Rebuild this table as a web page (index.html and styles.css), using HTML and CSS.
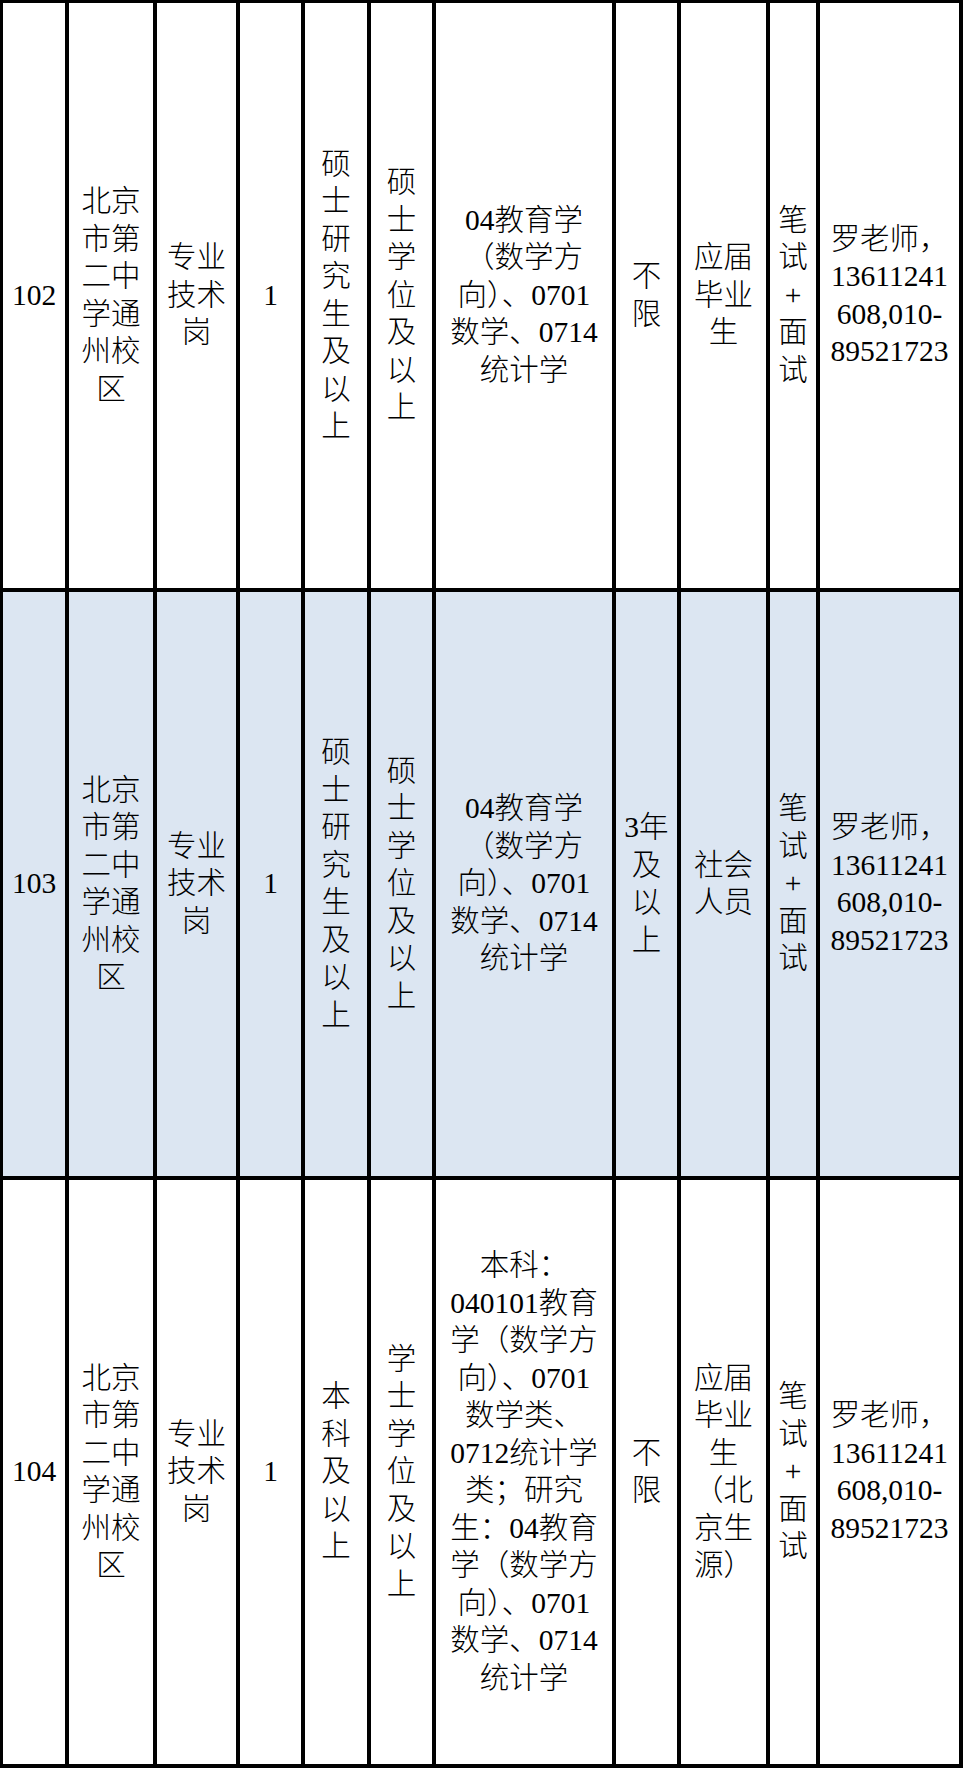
FILE: index.html
```html
<!DOCTYPE html>
<html lang="zh-CN">
<head>
<meta charset="utf-8">
<title>招聘岗位表</title>
<link rel="stylesheet" href="styles.css">
</head>
<body>
<div class="sheet">
  <!-- row 102 -->
  <div class="cell">102</div>
  <div class="cell">北京<br>市第<br>二中<br>学通<br>州校<br>区</div>
  <div class="cell">专业<br>技术<br>岗</div>
  <div class="cell">1</div>
  <div class="cell">硕<br>士<br>研<br>究<br>生<br>及<br>以<br>上</div>
  <div class="cell">硕<br>士<br>学<br>位<br>及<br>以<br>上</div>
  <div class="cell">04教育学<br>（数学方<br>向）、0701<br>数学、0714<br>统计学</div>
  <div class="cell">不<br>限</div>
  <div class="cell">应届<br>毕业<br>生</div>
  <div class="cell">笔<br>试<br>+<br>面<br>试</div>
  <div class="cell">罗老师，<br>13611241<br>608,010-<br>89521723</div>

  <!-- row 103 -->
  <div class="cell alt">103</div>
  <div class="cell alt">北京<br>市第<br>二中<br>学通<br>州校<br>区</div>
  <div class="cell alt">专业<br>技术<br>岗</div>
  <div class="cell alt">1</div>
  <div class="cell alt">硕<br>士<br>研<br>究<br>生<br>及<br>以<br>上</div>
  <div class="cell alt">硕<br>士<br>学<br>位<br>及<br>以<br>上</div>
  <div class="cell alt">04教育学<br>（数学方<br>向）、0701<br>数学、0714<br>统计学</div>
  <div class="cell alt">3年<br>及<br>以<br>上</div>
  <div class="cell alt">社会<br>人员</div>
  <div class="cell alt">笔<br>试<br>+<br>面<br>试</div>
  <div class="cell alt">罗老师，<br>13611241<br>608,010-<br>89521723</div>

  <!-- row 104 -->
  <div class="cell">104</div>
  <div class="cell">北京<br>市第<br>二中<br>学通<br>州校<br>区</div>
  <div class="cell">专业<br>技术<br>岗</div>
  <div class="cell">1</div>
  <div class="cell">本<br>科<br>及<br>以<br>上</div>
  <div class="cell">学<br>士<br>学<br>位<br>及<br>以<br>上</div>
  <div class="cell">本科：<br>040101教育<br>学（数学方<br>向）、0701<br>数学类、<br>0712统计学<br>类；研究<br>生：04教育<br>学（数学方<br>向）、0701<br>数学、0714<br>统计学</div>
  <div class="cell">不<br>限</div>
  <div class="cell">应届<br>毕业<br>生<br>（北<br>京生<br>源）</div>
  <div class="cell">笔<br>试<br>+<br>面<br>试</div>
  <div class="cell">罗老师，<br>13611241<br>608,010-<br>89521723</div>
</div>
</body>
</html>
```

FILE: styles.css
```css
html, body {
  margin: 0;
  padding: 0;
  background: #ffffff;
}

.sheet {
  display: grid;
  grid-template-columns: 66px 88px 83px 65px 66px 65px 180px 65px 89px 50px 143px;
  grid-template-rows: 589px 588px 588px;
  width: 963px;
  box-sizing: border-box;
  border-top: 3px solid #000;
  border-left: 3px solid #000;
  font-family: "Liberation Serif", "Noto Sans CJK SC", serif;
  font-size: 29.5px;
  font-weight: 300;
  line-height: 37.5px;
  color: #000;
}

.cell {
  box-sizing: border-box;
  border-right: 4px solid #000;
  border-bottom: 4px solid #000;
  display: flex;
  align-items: center;
  justify-content: center;
  text-align: center;
  white-space: nowrap;
  background: #ffffff;
}

.alt {
  background: #dce6f2;
}
```
